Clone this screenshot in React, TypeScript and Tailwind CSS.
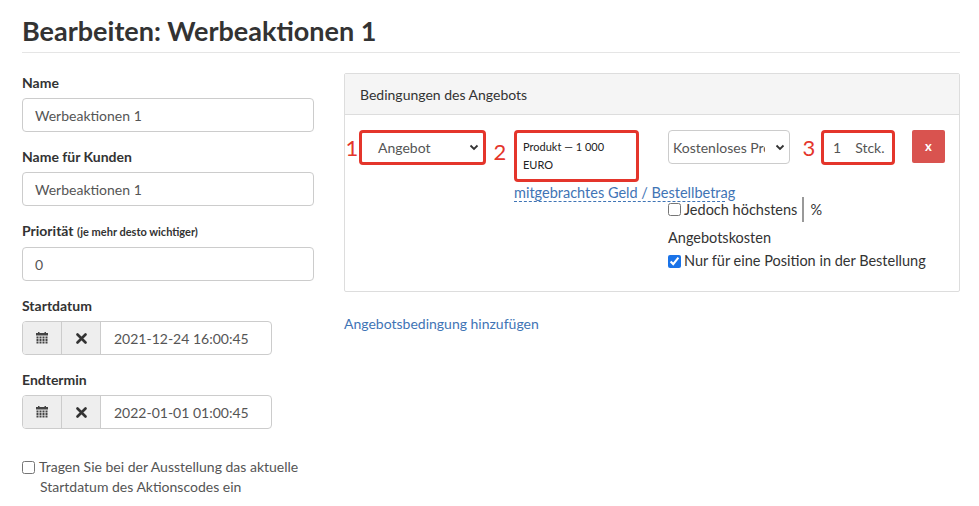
const font = { fontFamily: "Lato, 'Open Sans', sans-serif" };

const CalIcon = () => (
  <svg width="12" height="12" viewBox="0 0 12 12" fill="#444">
    <rect x="0" y="1" width="12" height="2.5" />
    <rect x="2" y="0" width="1.5" height="2" />
    <rect x="8.5" y="0" width="1.5" height="2" />
    {[4.5, 7, 9.5].map((y) =>
      [0.5, 3.5, 6.5, 9.5].map((x) => <rect key={`${x}-${y}`} x={x} y={y} width="2" height="2" />)
    )}
  </svg>
);

const XIcon = () => (
  <svg width="11" height="11" viewBox="0 0 11 11">
    <path d="M1.5 1.5 L9.5 9.5 M9.5 1.5 L1.5 9.5" stroke="#333" strokeWidth="2.6" strokeLinecap="round" />
  </svg>
);

const Chevron = () => (
  <svg width="10" height="7" viewBox="0 0 10 7" className="shrink-0">
    <path d="M1.5 1.5 L5 5 L8.5 1.5" stroke="#333" strokeWidth="1.8" fill="none" />
  </svg>
);

const DateField = ({ value }: { value: string }) => (
  <div className="flex h-[34px] w-[250px] rounded border border-[#ccc] overflow-hidden">
    <div className="w-[39px] bg-[#eee] border-r border-[#ccc] flex items-center justify-center">
      <CalIcon />
    </div>
    <div className="w-[39px] bg-[#eee] border-r border-[#ccc] flex items-center justify-center">
      <XIcon />
    </div>
    <div className="flex-1 flex items-center pl-[13px] text-[14px] text-[#555]">{value}</div>
  </div>
);

export default function App() {
  return (
    <div className="w-[979px] h-[506px] bg-white text-[#333] overflow-hidden" style={font}>
      <div className="pl-[22px] pr-[19px]">
        <h1 className="pt-[14px] text-[27px] font-bold leading-[34px] text-[#333]">Bearbeiten: Werbeaktionen 1</h1>
        <div className="mt-[4px] border-b border-[#e5e5e5]" />

        <div className="flex mt-[20px]">
          {/* Left form */}
          <div className="w-[292px] shrink-0 text-[14px]">
            <label className="block font-bold leading-[20px]">Name</label>
            <div className="mt-[5px] h-[34px] rounded border border-[#ccc] flex items-center px-[12px] text-[#555]">Werbeaktionen 1</div>

            <label className="block font-bold leading-[20px] mt-[15px]">Name für Kunden</label>
            <div className="mt-[5px] h-[34px] rounded border border-[#ccc] flex items-center px-[12px] text-[#555]">Werbeaktionen 1</div>

            <label className="block font-bold leading-[20px] mt-[15px]">
              Priorität <span className="text-[11px]">(je mehr desto wichtiger)</span>
            </label>
            <div className="mt-[5px] h-[34px] rounded border border-[#ccc] flex items-center px-[12px] text-[#555]">0</div>

            <label className="block font-bold leading-[20px] mt-[15px]">Startdatum</label>
            <div className="mt-[5px]"><DateField value="2021-12-24 16:00:45" /></div>

            <label className="block font-bold leading-[20px] mt-[15px]">Endtermin</label>
            <div className="mt-[5px]"><DateField value="2022-01-01 01:00:45" /></div>

            <div className="mt-[28px] flex items-start gap-[4px] text-[#555] leading-[20px] whitespace-nowrap">
              <input type="checkbox" className="mt-[4px] w-[13px] h-[13px]" />
              <div>
                Tragen Sie bei der Ausstellung das aktuelle
                <div className="pl-[1px]">Startdatum des Aktionscodes ein</div>
              </div>
            </div>
          </div>

          {/* Right panel */}
          <div className="ml-[30px] flex-1 min-w-0 text-[14px]">
            <div className="border border-[#ddd] rounded-[2px] h-[219px]">
              <div className="h-[41px] bg-[#f5f5f5] border-b border-[#ddd] flex items-center px-[15px] text-[#333]">
                Bedingungen des Angebots
              </div>
              <div className="flex items-start pt-[15px]">
                <span className="text-[#e4352b] text-[22px] leading-[36px] w-[14px] text-center">1</span>
                <div className="w-[127px] shrink-0 h-[35px] border-[3px] border-[#e4352b] rounded-[4px] flex items-center justify-between pl-[16px] pr-[4px] text-[#555]">
                  Angebot <Chevron />
                </div>
                <span className="ml-[6px] text-[#e4352b] text-[22px] leading-[44px] w-[16px] text-center">2</span>
                <div className="ml-[6px] w-[125px] shrink-0">
                  <div className="w-[125px] h-[52px] border-[3px] border-[#e4352b] rounded-[4px] px-[6px] pt-[5px] text-[11px] leading-[18px] text-[#222]">
                    Produkt — 1 000
                    <br />
                    EURO
                  </div>
                  <div className="mt-[2px] whitespace-nowrap text-[#3f74b5] border-b border-dashed border-[#3f74b5] w-[211px] leading-[17px] text-[14.5px]">
                    mitgebrachtes Geld / Bestellbetrag
                  </div>
                </div>
                <div className="ml-[29px] w-[122px] shrink-0">
                  <div className="w-[122px] h-[34px] border border-[#ccc] rounded-[4px] flex items-center justify-between pl-[4px] pr-[4px] text-[#555] overflow-hidden">
                    <span className="whitespace-nowrap overflow-hidden w-[92px]">Kostenloses Produkt</span> <Chevron />
                  </div>
                  <div className="mt-[33px] whitespace-nowrap text-[#333] leading-[20px] text-[14.5px]">
                    <div className="flex items-center gap-[3px]">
                      <input type="checkbox" className="w-[13px] h-[13px]" />
                      Jedoch höchstens
                      <span className="inline-block w-[37px] h-[25px] border border-[#999] ml-[2px]" />
                      <span className="ml-[3px]">%</span>
                    </div>
                    <div className="mt-[6px]">Angebotskosten</div>
                    <div className="mt-[3px] flex items-center gap-[3px]">
                      <input type="checkbox" defaultChecked className="w-[13px] h-[13px] accent-[#1a73e8]" />
                      Nur für eine Position in der Bestellung
                    </div>
                  </div>
                </div>
                <span className="ml-[11px] text-[#e4352b] text-[22px] leading-[36px] w-[16px] text-center">3</span>
                <div className="ml-[4px] w-[74px] shrink-0 h-[35px] border-[3px] border-[#e4352b] rounded-[4px] flex items-center pl-[9px] gap-[14px] text-[#555]">
                  <span>1</span><span>Stck.</span>
                </div>
                <div className="ml-[17px] w-[33px] shrink-0 h-[33px] bg-[#d9534f] rounded-[2px] flex items-center justify-center text-white text-[13px] font-bold">
                  x
                </div>
              </div>
            </div>
            <div className="mt-[21px] text-[#3f74b5]">Angebotsbedingung hinzufügen</div>
          </div>
        </div>
      </div>
    </div>
  );
}
